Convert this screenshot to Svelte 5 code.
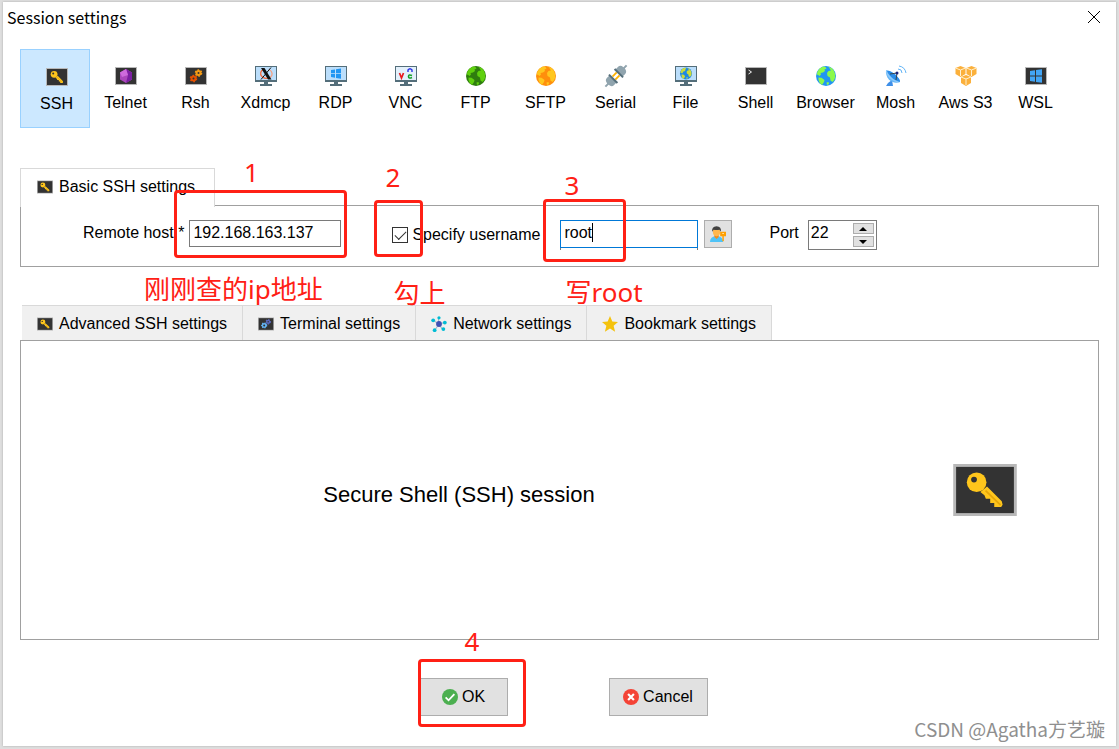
<script lang="ts">
	type SessionType = { id: string; label: string };

	const sessionTypes: SessionType[] = [
		{ id: 'key', label: 'SSH' },
		{ id: 'telnet', label: 'Telnet' },
		{ id: 'rsh', label: 'Rsh' },
		{ id: 'xdmcp', label: 'Xdmcp' },
		{ id: 'rdp', label: 'RDP' },
		{ id: 'vnc', label: 'VNC' },
		{ id: 'ftp', label: 'FTP' },
		{ id: 'sftp', label: 'SFTP' },
		{ id: 'serial', label: 'Serial' },
		{ id: 'file', label: 'File' },
		{ id: 'shell', label: 'Shell' },
		{ id: 'browser', label: 'Browser' },
		{ id: 'mosh', label: 'Mosh' },
		{ id: 'aws', label: 'Aws S3' },
		{ id: 'wsl', label: 'WSL' }
	];

	const settingTabs = [
		{ id: 'key', label: 'Advanced SSH settings' },
		{ id: 'terminal', label: 'Terminal settings' },
		{ id: 'network', label: 'Network settings' },
		{ id: 'star', label: 'Bookmark settings' }
	];

	let selected = $state('key');
	let host = $state('192.168.163.137');
	let specifyUser = $state(true);
	let username = $state('root');
	let port = $state(22);
</script>

{#snippet tile()}
	<rect x="1" y="3" width="22" height="18" fill="#b8b8b8" />
	<rect x="2" y="4" width="20" height="16" fill="#333" />
{/snippet}

{#snippet monitor()}
	<rect x="1" y="2" width="22" height="16" fill="#546e7a" />
	<rect x="2" y="3" width="20" height="13" fill="#bbdefb" />
	<path d="M10 18h4v2h4v2H6v-2h4z" fill="#546e7a" />
{/snippet}

{#snippet globe(sea: string, land: string)}
	<circle cx="12" cy="12" r="10" fill={sea} />
	<path
		d="M3.5 7.500Q5 4 9 2.600l2.500.4 1 1.500-2 1 .5 1.500-2 1.500-2.500.5.5 1.500-1.500 1.500-2-1.500-1 1zM4.500 13.500l3 .3 3 2.200-.5 2-2 3Q5 19 4.500 16zM14.500 2.800q3 .6 5 3.200 2 3 1.800 7-.6 3-2.800 5l-2-1.500-.5-3-2.500-1.500-.5-3 1.500-2 2.500-.5zM12.500 18.500l2-.5.5 2-2 1z"
		fill={land}
	/>
{/snippet}

{#snippet gear(x: number, y: number, r: number, color: string)}
	<circle cx={x} cy={y} {r} fill="none" stroke={color} stroke-width="2" />
	<circle cx={x} cy={y} r={r + 1} fill="none" stroke={color} stroke-width="1.6" stroke-dasharray="1.6 1.6" />
{/snippet}

{#snippet cube(x: number, y: number)}
	<path d="M{x} {y - 5}l5 2v6l-5 3-5-3v-6z" fill="#fbb03b" />
	<path d="M{x - 5} {y - 3}l5 2 5-2M{x} {y - 1}v6" fill="none" stroke="#fff0d0" stroke-width="1" />
{/snippet}

{#snippet icon(name: string)}
	{#if name === 'key'}
		{@render tile()}
		<path
			d="M10.4 12.7l1.4 1.1.5 1.2h1.5v1.5h1.4v1.4h2.4l.5-.8-.3-1.2-5.1-5.1z"
			fill="#ffc61c"
		/>
		<circle cx="9.1" cy="9.3" r="3.4" fill="#ffc61c" />
		<circle cx="8.2" cy="8.4" r="1" fill="#333" />
		<path d="M12.2 12.2l5.2 5" stroke="#e5a60b" stroke-width=".6" />
	{:else if name === 'telnet'}
		{@render tile()}
		<path d="M12 5l6 3.5v7L12 19l-6-3.5v-7z" fill="#ab47bc" />
		<path d="M12 5l6 3.5-4 2.5zM14 11l4-2.5v7L12 19z" fill="#7b1fa2" />
		<path d="M12 5l2 6-6 2-2-4.5z" fill="#ce6bdd" />
	{:else if name === 'rsh'}
		{@render tile()}
		{@render gear(14.5, 9, 2, '#f59b14')}
		{@render gear(9.5, 14.5, 2, '#e65100')}
	{:else if name === 'terminal'}
		{@render tile()}
		{@render gear(15, 9, 2, '#5c6bc0')}
		{@render gear(9.5, 14, 2.4, '#64b5f6')}
	{:else if name === 'xdmcp'}
		{@render monitor()}
		<path d="M9 5.5a5 4.5 0 1 0 6 8" fill="none" stroke="#f4683c" stroke-width="1.3" />
		<path d="M15 5.5c4 2 4 6 1 8" fill="none" stroke="#f6a083" stroke-width="1.3" />
		<path d="M7 4h3.5l7 11.5H14z" fill="#111" />
		<path d="M17 3.5L7 15.5" stroke="#111" />
	{:else if name === 'rdp'}
		{@render monitor()}
		<path d="M7 6l4-.6v3.8H7zM12 5.200l5-.7v4.700h-5zM7 10h4v3.700l-4-.6zM12 10h5v4.700l-5-.8z" fill="#2196f3" />
	{:else if name === 'vnc'}
		{@render monitor()}
		<rect x="2" y="3" width="20" height="13" fill="#e3f0fb" />
		<path d="M5.500 9l2 5 2-5" fill="none" stroke="#e8191c" stroke-width="1.7" />
		<path d="M14 8V6q2-2.500 4 0v2" fill="none" stroke="#2a32e6" stroke-width="1.4" />
		<path d="M18 11.500q-3.500-1.500-3.500 1t3.500 1" fill="none" stroke="#15a02a" stroke-width="1.6" />
	{:else if name === 'ftp'}
		{@render globe('#2e7d0e', '#5fd00e')}
	{:else if name === 'sftp'}
		{@render globe('#ff8f0c', '#ffc71f')}
	{:else if name === 'browser'}
		{@render globe('#2196f3', '#8bfa4b')}
	{:else if name === 'file'}
		{@render monitor()}
		<g transform="translate(4.8 2.3) scale(.6)">{@render globe('#1e88e5', '#cddc39')}</g>
	{:else if name === 'serial'}
		<g transform="rotate(45 12 12)">
			<path d="M10 9v6M14 9v6" stroke="#ffb300" stroke-width="1.8" />
			<path d="M7 8V4q0-3 4-3.500V-3h2V.5q4 .5 4 3.500v4zM7 16v4q0 3 4 3.500V27h2v-3.500q4-.5 4-3.500v-4z" fill="#90a4ae" />
			<path d="M6 7h12v2H6zM6 15h12v2H6z" fill="#546e7a" />
		</g>
	{:else if name === 'shell'}
		{@render tile()}
		<path d="M4.500 6l3 2-3 2" fill="none" stroke="#eee" />
	{:else if name === 'mosh'}
		<path d="M4 19l4-3 1 6H2z" fill="#3f8fe8" />
		<path d="M2 6c-1 9 7 15 14 12z" fill="#64b5f6" />
		<path d="M2 6c3 0 14 7 14 12-4 2-15-5-14-12z" fill="#90caf9" />
		<path d="M3 7c3-2 14 7 13 11-4-1-11-5-13-11z" fill="#2b8ce8" />
		<path d="M6 10l7-1-1 7" fill="none" stroke="#37474f" stroke-width="1" />
		<circle cx="13" cy="9" r="1.5" fill="#1a237e" />
		<path d="M14 5q4 0 4 4M15 2q6 1 7 7" fill="none" stroke="#64b5f6" stroke-width="1" />
	{:else if name === 'aws'}
		{@render cube(6.5, 7)}
		{@render cube(17.5, 7)}
		{@render cube(12, 16)}
	{:else if name === 'wsl'}
		{@render tile()}
		<path d="M6 7l5-.7v5.200H6zM12 6.100l6-.8v6.200h-6zM6 12.500h5v5.200L6 17zM12 12.500h6v6.200l-6-.8z" fill="#42a5f5" />
	{:else if name === 'network'}
		<path d="M12 12L4 7M12 12l-1-9M12 12l8-2M12 12l5 8M12 12l-6 9" stroke="#a9b8c2" stroke-width="1.5" />
		<circle cx="12" cy="12" r="4" fill="#3f51b5" />
		<g fill="#00bcd4">
			<circle cx="4" cy="7" r="2.6" />
			<circle cx="12" cy="3.5" r="2.2" />
			<circle cx="20" cy="10" r="2.6" />
			<circle cx="18" cy="19" r="2.6" />
			<circle cx="6" cy="20.5" r="2.6" />
		</g>
	{:else if name === 'star'}
		<path d="M12 1l3.200 7.600 7.800.6-6 5.300 2 8-7-4.300-7 4.300 2-8-6-5.300 7.800-.6z" fill="#f4c20d" />
	{:else if name === 'user'}
		<path d="M1 23q0-8 9-8t9 8z" fill="#4fc3f7" />
		<path d="M7 13h6v3l-3 3-3-3z" fill="#f28c1c" />
		<ellipse cx="10" cy="9" rx="5" ry="6" fill="#ffb74d" />
		<path d="M4 9q-1-7 6-7.500Q17 2 16 9l-2-3q-4 1-8 0z" fill="#424242" />
		<path d="M15 9h8v6h-3v7h-2v-7h-3z" fill="#ffa000" />
		<path d="M18 11h2v1h-2z" fill="#fff" />
	{:else if name === 'ok'}
		<circle cx="12" cy="12" r="11" fill="#4caf50" />
		<path d="M6 12.500l4 4 8-8.500" fill="none" stroke="#fff" stroke-width="2.5" />
	{:else if name === 'cancel'}
		<circle cx="12" cy="12" r="11" fill="#f44336" />
		<path d="M8 8l8 8M16 8l-8 8" fill="none" stroke="#fff" stroke-width="3" />
	{/if}
{/snippet}

{#snippet smallIcon(name: string)}
	<svg class="small-icon" viewBox="1 1 22 22" aria-hidden="true">{@render icon(name)}</svg>
{/snippet}

<main class="dialog">
	<header class="titlebar">
		<h1>Session settings</h1>
		<button class="close" aria-label="Close">
			<svg viewBox="0 0 12 12" aria-hidden="true"><path d="M0 0l12 12M12 0L0 12" stroke="#000" /></svg>
		</button>
	</header>

	<nav class="types">
		{#each sessionTypes as type (type.id)}
			<button class="type" class:selected={selected === type.id} onclick={() => (selected = type.id)}>
				<svg viewBox="0 0 24 24" aria-hidden="true">{@render icon(type.id)}</svg>
				<span>{type.label}</span>
			</button>
		{/each}
	</nav>

	<section class="basic">
		<button class="tab active">{@render smallIcon('key')}Basic SSH settings</button>
		<div class="panel fields">
			<div class="field host">
				<label for="host">Remote host *</label>
				<input id="host" type="text" bind:value={host} />
				<span class="frame frame-host"></span>
				<span class="note note-one">1</span>
				<span class="note note-host">刚刚查的ip地址</span>
			</div>
			<div class="field check">
				<input id="specify" type="checkbox" bind:checked={specifyUser} />
				<label for="specify">Specify username</label>
				<span class="frame frame-check"></span>
				<span class="note note-two">2</span>
				<span class="note note-check">勾上</span>
			</div>
			<div class="field user">
				<div class="user-box">
					<input type="text" aria-label="Username" bind:value={username} />
					<span class="caret"></span>
				</div>
				<button class="pick" aria-label="Choose user">{@render smallIcon('user')}</button>
				<span class="frame frame-user"></span>
				<span class="note note-three">3</span>
				<span class="note note-user">写root</span>
			</div>
			<div class="field port">
				<label for="port">Port</label>
				<div class="spin">
					<input id="port" type="text" bind:value={port} />
					<div class="arrows">
						<button aria-label="Increase port" onclick={() => port++}>
							<svg viewBox="0 0 8 4" aria-hidden="true"><path d="M0 4l4-4 4 4z" /></svg>
						</button>
						<button aria-label="Decrease port" onclick={() => port--}>
							<svg viewBox="0 0 8 4" aria-hidden="true"><path d="M0 0l4 4 4-4z" /></svg>
						</button>
					</div>
				</div>
			</div>
		</div>
	</section>

	<section class="advanced">
		<div class="tabs">
			{#each settingTabs as tab (tab.id)}
				<button class="tab">{@render smallIcon(tab.id)}{tab.label}</button>
			{/each}
		</div>
		<div class="panel summary">
			<p>Secure Shell (SSH) session</p>
			<svg class="big-key" viewBox="1 3 22 18" aria-hidden="true">{@render icon('key')}</svg>
		</div>
	</section>

	<footer class="actions">
		<div class="action">
			<button class="push ok">{@render smallIcon('ok')}OK</button>
			<span class="frame frame-ok"></span>
			<span class="note note-four">4</span>
		</div>
		<button class="push">{@render smallIcon('cancel')}Cancel</button>
	</footer>

	<span class="watermark">CSDN @Agatha方艺璇</span>
</main>

<style>
	:global(body) {
		margin: 0;
		background: #dedede;
	}

	:global(#app) {
		display: flex;
		min-height: 100vh;
	}

	.dialog,
	.dialog * {
		box-sizing: border-box;
	}

	.dialog {
		position: relative;
		display: flex;
		flex-direction: column;
		flex: 1;
		margin: 2px 3px 3px;
		padding: 0 17px 30px;
		background: #fff;
		box-shadow: 0 0 2px #aaa;
		color: #000;
		font: 16px/24px "Liberation Sans", Arial, sans-serif;
	}

	button,
	input {
		margin: 0;
		padding: 0;
		border: 0;
		border-radius: 0;
		background: none;
		color: inherit;
		font: inherit;
	}

	svg {
		display: block;
		flex-shrink: 0;
	}

	.titlebar {
		display: flex;
		align-items: center;
		justify-content: space-between;
		height: 30px;
		margin: 0 -12px 17px -13px;
	}

	h1 {
		margin: 0;
		font: 16px/24px "Noto Sans CJK SC", "Noto Sans", sans-serif;
	}

	.close {
		padding: 11px;
	}

	.close svg {
		width: 12px;
		height: 12px;
	}

	.types {
		display: flex;
		margin-bottom: 40px;
	}

	.type {
		display: flex;
		flex-direction: column;
		align-items: center;
		width: 70px;
		height: 79px;
		padding: 15px 0 0 1px;
		line-height: 30px;
		white-space: nowrap;
	}

	.type svg {
		width: 24px;
		height: 24px;
		overflow: visible;
	}

	.type.selected {
		padding-left: 3px;
		border: 1px solid #99d1ff;
		background: #cce8ff;
	}

	.small-icon {
		width: 16px;
		height: 16px;
	}

	.panel {
		border: 1px solid #a0a0a0;
	}

	.tab {
		display: flex;
		align-items: center;
		gap: 6px;
		height: 35px;
		padding: 1px 15px 0;
		border: solid #d9d9d9;
		border-width: 1px 1px 0 0;
		background: #f0f0f0;
		white-space: nowrap;
	}

	.tab.active {
		position: relative;
		height: 39px;
		margin-bottom: -2px;
		padding: 0 19px 2px 16px;
		border-left-width: 1px;
		background: #fff;
	}

	.fields {
		display: flex;
		align-items: flex-start;
		height: 62px;
		padding: 14px 0 0 62px;
	}

	.field {
		position: relative;
		display: flex;
		white-space: nowrap;
	}

	.host {
		line-height: 26px;
	}

	.host input {
		width: 152px;
		height: 27px;
		margin-left: 5px;
		padding: 0 3px 2px;
		border: 1px solid #7a7a7a;
	}

	.check {
		align-items: center;
		gap: 4px;
		height: 29px;
		margin-left: 51px;
	}

	.check input {
		appearance: none;
		width: 16px;
		height: 16px;
		border: 1px solid #333;
	}

	.check input:checked::before {
		content: "";
		display: block;
		width: 10px;
		height: 5px;
		margin: 3px 2px;
		border: solid #333;
		border-width: 0 0 1px 1px;
		transform: rotate(-45deg);
	}

	.user {
		gap: 6px;
		margin-left: 20px;
	}

	.user-box {
		position: relative;
		height: 30px;
		border: solid #7a7a7a;
		border-width: 0 1px;
	}

	.user-box input {
		display: block;
		width: 138px;
		height: 28px;
		margin: 0 -1px;
		padding: 0 3px 3px;
		border: 1px solid #0078d7;
		outline: none;
	}

	.caret {
		position: absolute;
		top: 3px;
		left: 31px;
		width: 1px;
		height: 19px;
		background: #000;
	}

	.pick {
		display: grid;
		place-items: center;
		width: 28px;
		height: 28px;
		border: 1px solid #adadad;
		background: #e1e1e1;
	}

	.port {
		gap: 9px;
		margin-left: 37px;
		line-height: 26px;
	}

	.spin {
		display: flex;
		width: 69px;
		height: 30px;
		border: 1px solid #7a7a7a;
	}

	.spin input {
		flex: 1;
		min-width: 0;
		height: 24px;
		padding-left: 2px;
	}

	.arrows {
		display: grid;
		gap: 2px;
		padding: 2px;
	}

	.arrows button {
		display: grid;
		place-items: center;
		width: 21px;
		height: 11px;
		border: 1px solid #adadad;
		background: #e1e1e1;
	}

	.arrows svg {
		width: 8px;
		height: 4px;
	}

	.advanced {
		display: flex;
		flex-direction: column;
		flex: 1;
		margin-top: 38px;
	}

	.tabs {
		display: flex;
		padding-left: 2px;
	}

	.summary {
		display: flex;
		align-items: center;
		justify-content: space-between;
		flex: 1;
		min-height: 200px;
		padding: 0 81px 0 0;
	}

	.summary p {
		flex: 1;
		margin: 10px 0 0;
		padding-right: 56px;
		font-size: 22px;
		text-align: center;
	}

	.big-key {
		width: 64px;
		height: 52px;
	}

	.actions {
		display: flex;
		justify-content: center;
		gap: 101px;
		margin-top: 38px;
		padding-left: 8px;
	}

	.action {
		position: relative;
	}

	.push {
		display: flex;
		align-items: center;
		justify-content: center;
		gap: 4px;
		width: 99px;
		height: 38px;
		border: 1px solid #adadad;
		background: #e1e1e1;
	}

	.push.ok {
		width: 88px;
	}

	/* red tutorial markers, anchored to the control they point at */
	.frame {
		position: absolute;
		border: 3px solid #ff2015;
		border-radius: 4px;
		pointer-events: none;
	}

	.note {
		position: absolute;
		color: #ff2015;
		font: 26px/32px "Noto Sans", "Noto Sans CJK SC", sans-serif;
		white-space: nowrap;
		pointer-events: none;
	}

	.frame-host {
		top: -30px;
		left: 91px;
		width: 173px;
		height: 68px;
	}

	.note-one {
		top: -64px;
		left: 161px;
	}

	.note-host {
		top: 53px;
		left: 61px;
	}

	.frame-check {
		top: -20px;
		left: -18px;
		width: 49px;
		height: 57px;
	}

	.note-two {
		top: -59px;
		left: -7px;
	}

	.note-check {
		top: 57px;
		left: 1px;
	}

	.frame-user {
		top: -21px;
		left: -17px;
		width: 83px;
		height: 63px;
	}

	.note-three {
		top: -51px;
		left: 4px;
	}

	.note-user {
		top: 56px;
		left: 5px;
	}

	.frame-ok {
		top: -19px;
		left: -2px;
		width: 108px;
		height: 68px;
	}

	.note-four {
		top: -53px;
		left: 45px;
	}

	.watermark {
		position: absolute;
		right: 11px;
		bottom: 5px;
		color: #8f8f8f;
		font: 19px/24px "Noto Sans CJK SC", sans-serif;
		text-shadow: 1px 1px 0 #fff;
	}
</style>
